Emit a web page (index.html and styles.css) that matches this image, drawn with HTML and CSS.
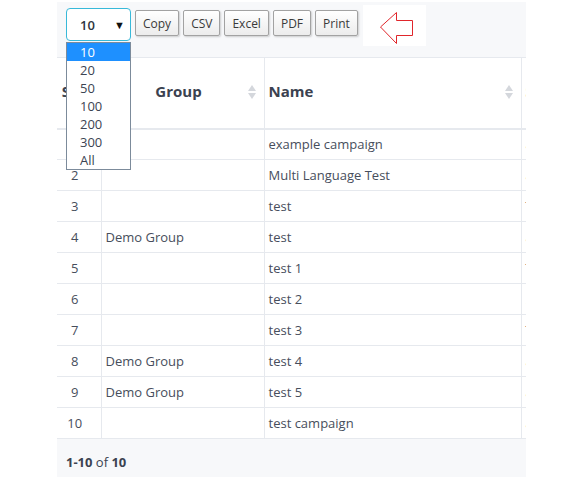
FILE: index.html
```html
<!DOCTYPE html>
<html>
<head>
<meta charset="utf-8">
<link rel="stylesheet" href="styles.css">
</head>
<body>
<div class="panel">
  <div class="toolbar">
    <div class="select-wrap">
      <div class="select">
        <span class="select-value">10</span>
        <span class="select-caret">&#9660;</span>
      </div>
      <ul class="options">
        <li class="option selected">10</li>
        <li class="option">20</li>
        <li class="option">50</li>
        <li class="option">100</li>
        <li class="option">200</li>
        <li class="option">300</li>
        <li class="option">All</li>
      </ul>
    </div>
    <button class="btn">Copy</button>
    <button class="btn">CSV</button>
    <button class="btn">Excel</button>
    <button class="btn">PDF</button>
    <button class="btn">Print</button>
    <div class="arrow-box">
      <svg width="63" height="41" viewBox="0 0 63 41">
        <path d="M17.5 22 L33.5 7.5 L33.5 15.5 L49.5 15.5 L49.5 30.5 L33.5 30.5 L33.5 38.5 Z" fill="none" stroke="#e0262b" stroke-width="1"/>
      </svg>
    </div>
  </div>
  <table class="grid">
    <thead>
      <tr>
        <th class="c-num"><span class="th-in">S.No</span></th>
        <th class="c-group sortable"><span class="th-in center">Group</span><span class="sort"></span></th>
        <th class="c-name sortable"><span class="th-in">Name</span><span class="sort"></span></th>
        <th class="c-more sortable"><span class="th-in">Status</span></th>
      </tr>
    </thead>
    <tbody>
      <tr><td class="c-num">1</td><td></td><td>example campaign</td><td>active</td></tr>
      <tr><td class="c-num">2</td><td></td><td>Multi Language Test</td><td>active</td></tr>
      <tr><td class="c-num">3</td><td></td><td>test</td><td>Test</td></tr>
      <tr><td class="c-num">4</td><td>Demo Group</td><td>test</td><td>active</td></tr>
      <tr><td class="c-num">5</td><td></td><td>test 1</td><td>Test</td></tr>
      <tr><td class="c-num">6</td><td></td><td>test 2</td><td>.active</td></tr>
      <tr><td class="c-num">7</td><td></td><td>test 3</td><td>Test</td></tr>
      <tr><td class="c-num">8</td><td>Demo Group</td><td>test 4</td><td>active</td></tr>
      <tr><td class="c-num">9</td><td>Demo Group</td><td>test 5</td><td>active</td></tr>
      <tr><td class="c-num">10</td><td></td><td>test campaign</td><td>active</td></tr>
    </tbody>
  </table>
  <div class="footer"><b>1-10</b> of <b>10</b></div>
</div>
</body>
</html>
```
FILE: styles.css
```css
* { box-sizing: border-box; }
html, body { margin: 0; padding: 0; background: #ffffff; }
body { font-family: "Open Sans", "Liberation Sans", sans-serif; color: #474e5c; }

.panel {
  margin: 2px 0 0 57px;
  width: 469px;
  height: 475px;
  background: #f7f8fa;
  overflow: hidden;
  position: relative;
}

.toolbar {
  height: 55px;
  display: flex;
  align-items: flex-start;
  padding: 6px 0 0 9px;
}

.select-wrap { position: relative; width: 65px; height: 33px; margin-right: 4px; flex: none; }
.select {
  width: 65px; height: 33px;
  border: 1px solid #38b9d9;
  border-radius: 4px;
  background: #fff;
  display: flex; align-items: center;
  padding: 0 0 0 13px;
  font-size: 13px; font-weight: 600; color: #2f3540;
}
.select-value { flex: 1; }
.select-caret { font-size: 11px; color: #111; margin-right: 5px; }

.options {
  position: absolute; top: 34px; left: 0;
  width: 65px; margin: 0; padding: 0; list-style: none;
  background: #fff; border: 1px solid #7c8b9b;
  z-index: 5;
}
.option { height: 18px; line-height: 18px; padding-left: 13px; font-size: 13px; color: #3c4452; }
.option.selected { background: #1e90ff; color: #fff; }

.btn {
  flex: none;
  margin-top: 2px;
  margin-right: 4px;
  height: 26px;
  padding: 0 7px;
  font-family: "Open Sans", "Liberation Sans", sans-serif;
  font-size: 12px;
  color: #3a3a3a;
  background: linear-gradient(#ffffff, #ececec);
  border: 1px solid #a2a2a2;
  border-radius: 2px;
  box-shadow: 1px 1px 2px rgba(0,0,0,0.18);
}

.arrow-box { flex: none; width: 63px; height: 41px; background: #fff; margin-left: 1px; margin-top: -3px; }
.arrow-box svg { display: block; }

.grid {
  border-collapse: collapse;
  background: #fff;
  table-layout: fixed;
  width: 600px;
  border-top: 1px solid #e6e9ee;
}
.grid th, .grid td { border-left: 1px solid #e6e9ee; border-right: 1px solid #e6e9ee; }
.grid th:first-child, .grid td:first-child { border-left: none; }
.grid th {
  height: 71px;
  border-bottom: 2px solid #e6e9ee;
  font-size: 15px; font-weight: 700; color: #3b4250;
  text-align: left; padding: 0 4px 3px 4px;
  position: relative;
  white-space: nowrap;
}
.th-in.center { display: block; text-align: center; padding-right: 8px; }
.grid td {
  height: 31px;
  border-bottom: 1px solid #e6e9ee;
  font-size: 13px; color: #474e5c;
  padding: 0 4px 0 4px;
  white-space: nowrap;
}
.grid .c-num { width: 44px; text-align: center; padding: 0 8px 0 0; }
.grid th.c-num { padding: 0 0 3px 0; text-align: center; }
.c-group { width: 163px; }
.c-name { width: 257px; }
.c-more { width: 136px; }

.sort {
  position: absolute; right: 8px; top: 27px;
  width: 8px; height: 14px;
}
.sort::before, .sort::after {
  content: ""; position: absolute; left: 0;
  border-left: 4px solid transparent; border-right: 4px solid transparent;
}
.sort::before { top: 0; border-bottom: 6px solid #d4d7dc; }
.sort::after { bottom: 0; border-top: 6px solid #d4d7dc; }

.footer {
  height: 40px;
  padding: 14px 0 0 9px;
  font-size: 13px;
  color: #3b4250;
}
.footer b { font-weight: 700; }
```
